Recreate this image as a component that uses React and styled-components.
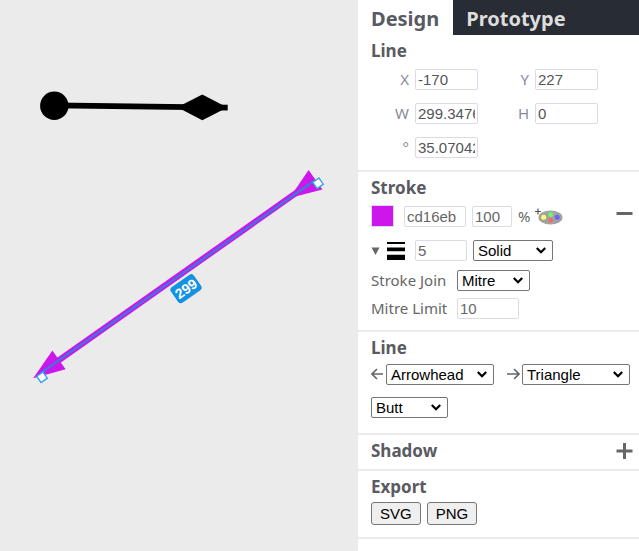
import React, { useState } from 'react'
import styled, { createGlobalStyle, ThemeProvider } from 'styled-components'

const theme = {
  canvas: '#ebebeb',
  dark: '#282c34',
  heading: '#5a5a62',
  text: '#666666',
  label: '#8a8a9c',
  fieldBorder: '#dadaea',
  controlBorder: '#767676',
  accent: '#1292e0',
  stroke: '#cd16eb',
  uiFont: '"Noto Sans", "Open Sans", sans-serif',
  fieldFont: '"Liberation Sans", Arial, sans-serif'
}

const GlobalStyle = createGlobalStyle`
  *, *::before, *::after {
    box-sizing: border-box;
  }

  body {
    margin: 0;
    background: ${theme.canvas};
    font-family: ${theme.uiFont};
    color: ${theme.text};
  }
`

const Editor = styled.div`
  display: flex;
  min-height: 100vh;
`

const Canvas = styled.main`
  display: flex;
  flex: 1;
  min-width: 0;
  background: ${props => props.theme.canvas};
`

const Drawing = styled.svg`
  flex: 1;
  min-width: 0;
  font: bold 14px ${props => props.theme.fieldFont};
`

const Panel = styled.aside`
  flex: 0 0 281px;
  background: #fff;
`

const Tabs = styled.nav`
  display: flex;
  background: ${props => props.theme.dark};
`

const Tab = styled.button`
  height: 35px;
  padding: 2px 14px 0 13px;
  border: 0;
  background: ${props => props.$active ? '#fff' : 'transparent'};
  color: ${props => props.$active ? props.theme.heading : '#dddddd'};
  font: bold 20px ${props => props.theme.uiFont};
`

const Section = styled.section`
  padding: 4px 6px ${props => props.$bottom || 12}px 13px;
  border-bottom: 2px solid ${props => props.theme.canvas};
`

const Heading = styled.h2`
  margin: 0;
  color: ${props => props.theme.heading};
  font-size: 17px;
  font-weight: bold;
  line-height: 24px;
`

const HeadingRow = styled.div`
  display: flex;
  align-items: center;
  justify-content: space-between;
`

const Geometry = styled.div`
  display: grid;
  grid-template-columns: 38px 63px 45px 63px;
  gap: 13px 6px;
  align-items: center;
  margin-top: 6px;
`

const AxisLabel = styled.label`
  color: ${props => props.theme.label};
  font-size: 15px;
  line-height: 21px;
  text-align: right;
`

const Row = styled.div`
  display: flex;
  align-items: center;
  gap: ${props => props.$gap || 6}px;
  margin-top: ${props => props.$top || 0}px;
`

const Field = styled.input`
  width: ${props => props.$width || 62}px;
  height: 21px;
  padding: 0 2px;
  border: 1px solid ${props => props.theme.fieldBorder};
  border-radius: 2px;
  background: #fff;
  color: ${props => props.$strong ? '#55555a' : props.theme.text};
  font: 15px ${props => props.theme.fieldFont};
`

const SelectBox = styled.span`
  position: relative;
  display: flex;
  width: ${props => props.$width}px;

  select {
    width: 100%;
    height: 21px;
    padding: 0 20px 0 4px;
    border: 1px solid ${props => props.theme.controlBorder};
    border-radius: 2px;
    appearance: none;
    background: #fff;
    color: #000;
    font: 15px ${props => props.theme.fieldFont};
  }

  svg {
    position: absolute;
    top: 7px;
    right: 7px;
    pointer-events: none;
  }
`

const RowLabel = styled.label`
  width: 80px;
  font-size: 15px;
  line-height: 21px;
  white-space: nowrap;
`

const Unit = styled.span`
  font-size: 15px;
  line-height: 21px;
`

const Swatch = styled.button`
  width: 23px;
  height: 22px;
  margin-right: 4px;
  padding: 0;
  border: 1px solid ${props => props.theme.fieldBorder};
  background: ${props => props.theme.stroke};
`

const IconButton = styled.button`
  display: flex;
  align-self: ${props => props.$end ? 'flex-start' : 'center'};
  padding: 0;
  border: 0;
  margin-left: ${props => props.$end ? 'auto' : 0};
  background: none;
  color: ${props => props.theme.text};
`

const ArrowLabel = styled.label`
  display: flex;
  color: ${props => props.theme.text};
`

const Ends = styled.div`
  display: flex;
  gap: 13px;
  margin-top: 4px;
`

const ExportButton = styled.button`
  height: 23px;
  padding: 0 8px;
  border: 1px solid ${props => props.theme.controlBorder};
  border-radius: 3px;
  background: #efefef;
  color: #000;
  font: 15px ${props => props.theme.fieldFont};
`

const GEOMETRY = [
  { id: 'x', label: 'X', value: '-170' },
  { id: 'y', label: 'Y', value: '227' },
  { id: 'w', label: 'W', value: '299.34762' },
  { id: 'h', label: 'H', value: '0' },
  { id: 'angle', label: '°', value: '35.070422' }
]

const Shapes = () => (
  <Drawing role='img' aria-label='Lines on the canvas'>
    <g fill='#000'>
      <circle cx='54.3' cy='105.8' r='14.2' />
      <path d='M54 105.3L227.7 107.7' stroke='#000' strokeWidth='5.8' />
      <path d='M177.3 107.2L202.3 94.5L227.3 107.4L202.3 120.3Z' />
    </g>
    <g fill={theme.stroke}>
      <path d='M56 362.2L302 188.8' stroke={theme.stroke} strokeWidth='6' />
      <path d='M33.2 378.3L52.4 350.5L65.6 369.3Z' />
      <path d='M289.6 198L308.6 170L322.4 189.4Z' />
    </g>
    <path d='M41 372.9L314 181' stroke='#3b78dc' strokeWidth='2.2' />
    <g fill='#fff' stroke='#36a4ea' strokeWidth='1.4'>
      <rect x='-3.8' y='-3.8' width='7.6' height='7.6' transform='translate(42 377.3) rotate(-35)' />
      <rect x='-3.8' y='-3.8' width='7.6' height='7.6' transform='translate(318 183.3) rotate(-35)' />
    </g>
    <g transform='translate(186 288.7) rotate(-35)'>
      <rect x='-14' y='-9.5' width='28' height='19' rx='3.5' fill={theme.accent} />
      <text y='5' fill='#fff' textAnchor='middle'>299</text>
    </g>
  </Drawing>
)

const PaletteIcon = () => (
  <svg width='28' height='18' viewBox='0 0 28 18'>
    <ellipse cx='15.5' cy='10.5' rx='12' ry='7' fill='#a2a2a2' />
    <path d='M0 4.5H6M3 1.5V7.5' stroke='#555' strokeWidth='1.2' />
    <circle cx='8.7' cy='10.2' r='2.5' fill='#ffff66' />
    <circle cx='15.7' cy='7.7' r='2.4' fill='#66ff66' />
    <circle cx='22.2' cy='10.2' r='2.5' fill='#6666ff' />
    <circle cx='15.7' cy='13.1' r='2.4' fill='#ff6666' />
  </svg>
)

const WidthIcon = () => (
  <svg width='18' height='18' viewBox='0 0 18 18'>
    <path d='M0 0H18V2H0ZM0 5.5H18V9.3H0ZM0 12.7H18V18H0Z' />
  </svg>
)

const ArrowIcon = ({ right }) => (
  <svg width='13' height='13' viewBox='0 0 13 13' fill='none' stroke='currentColor' strokeWidth='1.6'>
    <path d={right ? 'M0 6H12M7 1L12 6L7 11' : 'M12 6H1M6 1L1 6L6 11'} />
  </svg>
)

const SignIcon = ({ plus }) => (
  <svg width='17' height='17' viewBox='0 0 17 17' stroke='currentColor' strokeWidth='3'>
    <path d={plus ? 'M0.5 8H16.5M8.5 0V16' : 'M0.5 8.5H16.5'} />
  </svg>
)

const Select = ({ id, label, width, option }) => (
  <SelectBox $width={width}>
    <select id={id} aria-label={label}>
      <option>{option}</option>
    </select>
    <svg width='10' height='7' viewBox='0 0 10 7' fill='none' stroke='#000' strokeWidth='2.2'>
      <path d='M0.8 1L5 5.2L9.2 1' />
    </svg>
  </SelectBox>
)

const GeometrySection = () => (
  <Section>
    <Heading>Line</Heading>
    <Geometry>
      {GEOMETRY.map(g =>
        <React.Fragment key={g.id}>
          <AxisLabel htmlFor={g.id}>{g.label}</AxisLabel>
          <Field id={g.id} $width={63} $strong defaultValue={g.value} />
        </React.Fragment>
      )}
    </Geometry>
  </Section>
)

const StrokeSection = () => {
  const [open, setOpen] = useState(true)

  return (
    <Section $bottom={11}>
      <Heading>Stroke</Heading>
      <Row $top={5}>
        <Swatch aria-label='Stroke colour' />
        <Field aria-label='Hex colour' defaultValue='cd16eb' />
        <Field aria-label='Opacity' $width={40} defaultValue='100' />
        <Row $gap={5}>
          <Unit>%</Unit>
          <IconButton aria-label='Add to palette'><PaletteIcon /></IconButton>
        </Row>
        <IconButton $end aria-label='Remove stroke'><SignIcon /></IconButton>
      </Row>
      <Row $top={13}>
        <IconButton aria-label='Stroke options' onClick={() => setOpen(!open)}>
          <svg width='10' height='8' viewBox='0 0 10 8' fill='currentColor'>
            <path d='M0.5 0.5H8.5L4.5 8Z' />
          </svg>
        </IconButton>
        <Row as='label' htmlFor='width' $gap={10}>
          <WidthIcon />
          <Field id='width' $width={52} defaultValue='5' />
        </Row>
        <Select label='Dash style' width={80} option='Solid' />
      </Row>
      {open && <React.Fragment>
        <Row $top={9}>
          <RowLabel htmlFor='join'>Stroke Join</RowLabel>
          <Select id='join' width={73} option='Mitre' />
        </Row>
        <Row $top={7}>
          <RowLabel htmlFor='limit'>Mitre Limit</RowLabel>
          <Field id='limit' defaultValue='10' />
        </Row>
      </React.Fragment>}
    </Section>
  )
}

const EndsSection = () => (
  <Section $bottom={15}>
    <Heading>Line</Heading>
    <Ends>
      <Row $gap={2}>
        <ArrowLabel htmlFor='start'><ArrowIcon /></ArrowLabel>
        <Select id='start' label='Line start' width={108} option='Arrowhead' />
      </Row>
      <Row $gap={2}>
        <ArrowLabel htmlFor='end'><ArrowIcon right /></ArrowLabel>
        <Select id='end' label='Line end' width={108} option='Triangle' />
      </Row>
    </Ends>
    <Row $top={12}>
      <Select label='Line cap' width={77} option='Butt' />
    </Row>
  </Section>
)

const App = () => (
  <ThemeProvider theme={theme}>
    <GlobalStyle />
    <Editor>
      <Canvas>
        <Shapes />
      </Canvas>
      <Panel>
        <Tabs>
          <Tab $active>Design</Tab>
          <Tab>Prototype</Tab>
        </Tabs>
        <GeometrySection />
        <StrokeSection />
        <EndsSection />
        <Section $bottom={6}>
          <HeadingRow>
            <Heading>Shadow</Heading>
            <IconButton aria-label='Add shadow'><SignIcon plus /></IconButton>
          </HeadingRow>
        </Section>
        <Section>
          <Heading>Export</Heading>
          <Row $top={3} $gap={6}>
            <ExportButton>SVG</ExportButton>
            <ExportButton>PNG</ExportButton>
          </Row>
        </Section>
      </Panel>
    </Editor>
  </ThemeProvider>
)

export default App
